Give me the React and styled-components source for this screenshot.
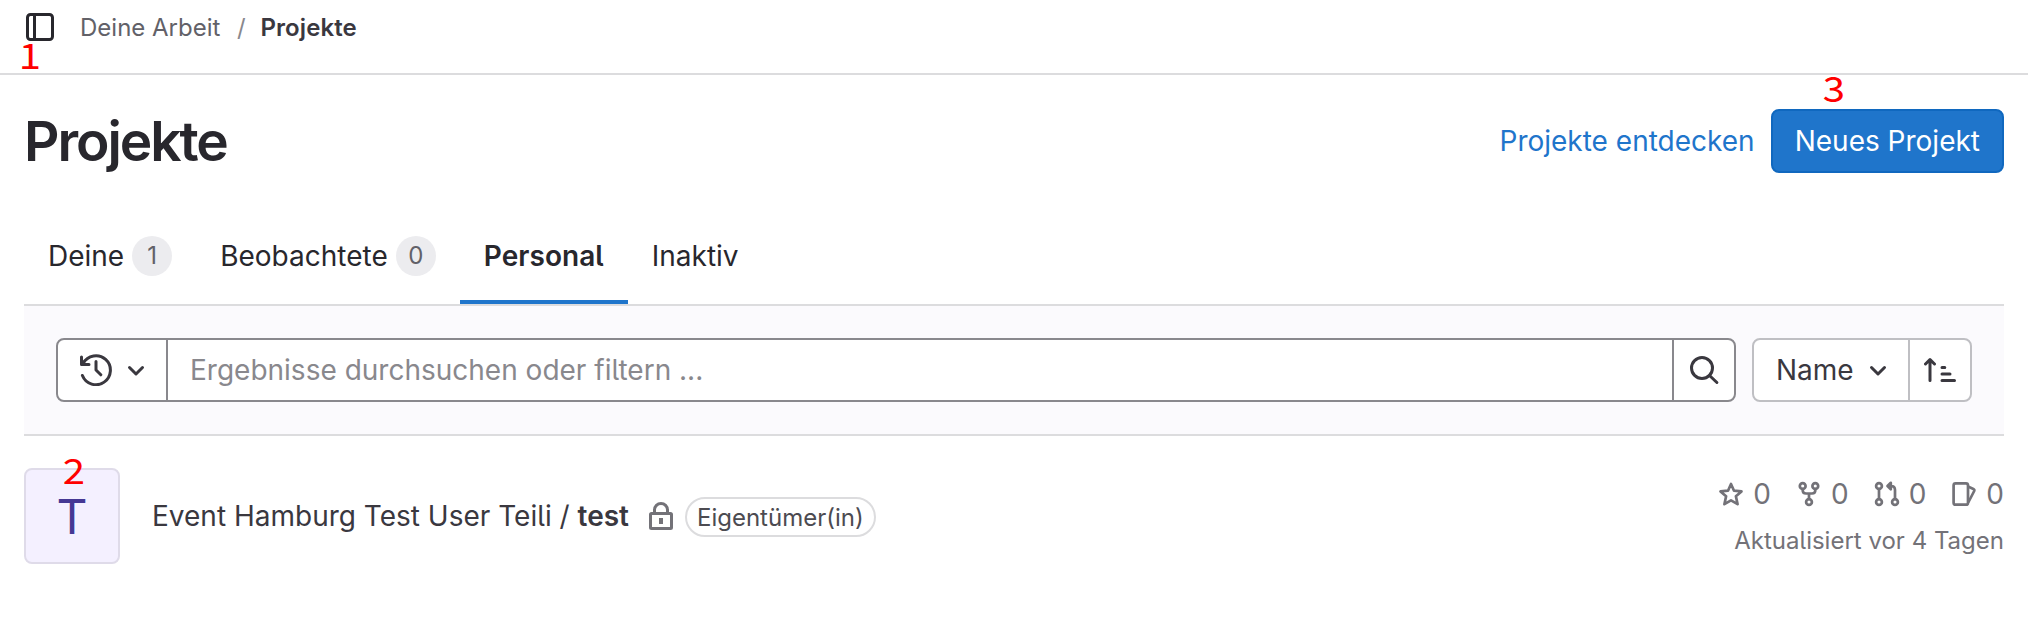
import React from "react";
import styled, { createGlobalStyle } from "styled-components";

const GlobalStyle = createGlobalStyle`
  *, *::before, *::after { box-sizing: border-box; }
  body {
    margin: 0;
    background: #fff;
    color: #28272d;
    font-family: Inter, "Noto Sans", sans-serif;
    font-size: 28px;
    line-height: 40px;
    font-feature-settings: "cv05";
    overflow: hidden;
  }
  h1, p { margin: 0; }
  button, input { font: inherit; letter-spacing: inherit; color: inherit; font-feature-settings: inherit; }
`;

const Page = styled.div`
  position: relative;
  min-height: 628px;
`;

const TopBar = styled.header`
  display: flex;
  align-items: flex-start;
  gap: 24px;
  height: 75px;
  padding: 11px 24px 0;
  border-bottom: 2px solid #dcdcde;
`;

const IconButton = styled.button`
  display: flex;
  padding: 0;
  border: 0;
  background: none;
`;

const Svg = styled.svg`
  display: block;
  flex: none;
  width: ${(p) => p.$size || 32}px;
  height: ${(p) => p.$size || 32}px;
  fill: none;
  stroke: ${(p) => p.$color || "#3a383f"};
  stroke-width: ${(p) => p.$weight || 3};
  stroke-linecap: round;
  stroke-linejoin: round;
`;

const Breadcrumbs = styled.nav`
  display: flex;
  font-size: 24px;
  line-height: 33px;
`;

const Crumb = styled.span`
  font-weight: ${(p) => (p.$current ? 600 : 400)};
  color: ${(p) => (p.$current ? "#3a383f" : "#626168")};
  letter-spacing: ${(p) => (p.$current ? "0.1px" : "0")};
`;

const Slash = styled.span`
  width: 40px;
  padding-left: 2px;
  text-align: center;
  color: #89888d;
`;

const Main = styled.main`
  padding: 34px 24px 0;
`;

const TitleRow = styled.div`
  display: flex;
  align-items: center;
  height: 64px;
`;

const Title = styled.h1`
  flex: 1;
  font-size: 55px;
  line-height: 64px;
  font-weight: 600;
  letter-spacing: -2.05px;
`;

const LinkButton = styled.a`
  margin-right: 16px;
  color: #1f75cb;
`;

const PrimaryButton = styled.button`
  height: 64px;
  padding: 0 22px;
  border: 2px solid #1068bf;
  border-radius: 8px;
  background: #1f75cb;
  color: #fff;
`;

const Tabs = styled.div`
  display: flex;
  height: 98px;
  margin-top: 35px;
  border-bottom: 2px solid #dcdcde;
`;

const Tab = styled.div`
  display: flex;
  align-items: center;
  gap: 8px;
  padding: 0 24px;
  font-weight: ${(p) => (p.$active ? 600 : 400)};
  letter-spacing: ${(p) => (p.$active ? "0.06px" : "0")};
  box-shadow: ${(p) => (p.$active ? "inset 0 -4px 0 #1f75cb" : "none")};
`;

const Count = styled.span`
  width: 40px;
  height: 40px;
  border-radius: 20px;
  background: #ececef;
  color: #626168;
  font-size: 24px;
  text-align: center;
`;

const FilterBar = styled.div`
  display: flex;
  gap: 16px;
  height: 130px;
  padding: 32px 32px 0;
  background: #fbfafd;
  border-bottom: 2px solid #dcdcde;
`;

const ControlGroup = styled.div`
  display: flex;
  flex: ${(p) => (p.$grow ? 1 : "none")};
  height: 64px;
  border: 2px solid ${(p) => p.$line};
  border-radius: 8px;
  background: #fff;
  overflow: hidden;
  && > * + * { border-left: 2px solid ${(p) => p.$line}; }
`;

const Segment = styled.button`
  display: flex;
  align-items: center;
  justify-content: space-between;
  width: ${(p) => p.$width}px;
  padding: ${(p) => p.$pad || "0"};
  border: 0;
  background: none;
  color: #3a383f;
`;

const SearchInput = styled.input`
  flex: 1;
  min-width: 0;
  padding: 0 22px;
  border: 0;
  outline: 0;
  background: none;
  &::placeholder { color: #89888d; opacity: 1; }
`;

const ProjectRow = styled.article`
  display: flex;
  align-items: center;
  height: 96px;
  margin-top: 32px;
`;

const Avatar = styled.div`
  width: 96px;
  height: 96px;
  margin-right: 32px;
  border: 2px solid #dfdbe9;
  border-radius: 8px;
  background: #f4f0ff;
  color: #453894;
  font-size: 48px;
  line-height: 94px;
  text-align: center;
`;

const ProjectName = styled.div`
  flex: 1;
  display: flex;
  align-items: center;
  color: #3a383f;
  white-space: pre;
  strong { font-weight: 600; }
`;

const LockSlot = styled.span`
  margin: 0 10px 0 18px;
`;

const RoleBadge = styled.span`
  height: 40px;
  margin-top: 2px;
  padding: 0 10px;
  border: 2px solid #dcdcde;
  border-radius: 20px;
  color: #4c4b51;
  font-size: 24px;
  line-height: 37px;
`;

const Meta = styled.div`
  display: flex;
  flex-direction: column;
  align-items: flex-end;
  gap: 7px;
  padding-top: 3px;
  color: #737278;
`;

const Stats = styled.div`
  display: flex;
  gap: 24px;
`;

const Stat = styled.span`
  display: flex;
  align-items: center;
  gap: 8px;
`;

const Updated = styled.p`
  font-size: 24px;
`;

const Marker = styled.span`
  position: absolute;
  left: ${(p) => p.$x}px;
  top: ${(p) => p.$y}px;
  color: #f00;
  font: 35.5px/36px "Noto Sans CJK SC", sans-serif;
  transform: scaleX(1.13);
`;

const SidebarIcon = () => (
  <Svg viewBox="0 0 32 32" $color="#28272d">
    <rect x="3.5" y="3.5" width="25" height="25" rx="3" />
    <path d="M10.5 3.5v25" />
  </Svg>
);

const HistoryIcon = () => (
  <Svg viewBox="0 0 32 32">
    <path d="M2.4 21.5A14.5 14.5 0 1 0 3.2 9.2M1.5 3v7.5H9M16 7.5V16l4.8 4.8" />
  </Svg>
);

const ChevronIcon = () => (
  <Svg viewBox="0 0 32 32">
    <path d="M9.5 13.5L16 20l6.5-6.5" />
  </Svg>
);

const SearchIcon = () => (
  <Svg viewBox="0 0 32 32">
    <circle cx="14" cy="14" r="10.5" />
    <path d="M21.5 21.5l7.4 7" />
  </Svg>
);

const SortIcon = () => (
  <Svg viewBox="0 0 32 32">
    <path d="M6 26.5V6M1.5 10L6 5.5l4.5 4.5M18 13.5h2.8M18 20h8M18 26.5h12.5" />
  </Svg>
);

const LockIcon = () => (
  <Svg viewBox="0 0 28 28" $size={28} $color="#737278">
    <rect x="3.5" y="11.5" width="21" height="15" rx="1" />
    <path d="M7.5 11V8a6.5 6.5 0 0 1 13 0v3" />
    <rect x="12" y="16" width="4" height="6" fill="#737278" stroke="none" />
  </Svg>
);

const StatIcon = ({ children }) => (
  <Svg viewBox="0 0 28 28" $size={28} $color="#737278" $weight={2.7}>{children}</Svg>
);

const StarIcon = () => (
  <StatIcon>
    <path d="M14 4l3 6.7 7.5.7-5.6 4.9 1.7 7.9-6.6-3.9-6.6 3.9 1.7-7.9-5.6-4.9 7.5-.7z" />
  </StatIcon>
);

const ForkIcon = () => (
  <StatIcon>
    <circle cx="7.7" cy="6" r="2.9" />
    <circle cx="20.3" cy="6" r="2.9" />
    <circle cx="14" cy="22" r="2.9" />
    <path d="M7.7 9v1.2c0 2.2 1.3 3.3 3.3 3.3h6c2 0 3.3-1.1 3.3-3.3V9M14 13.5V19" />
  </StatIcon>
);

const MergeIcon = () => (
  <StatIcon>
    <circle cx="6" cy="6" r="2.9" />
    <circle cx="6" cy="22" r="2.9" />
    <circle cx="22" cy="22" r="2.9" />
    <path d="M6 9v10M22 19v-9c0-2.5-1.5-4-4-4h-3M17.8 2.8L14.5 6l3.3 3.2z" />
  </StatIcon>
);

const IssuesIcon = () => (
  <StatIcon>
    <rect x="3.6" y="3.4" width="14.4" height="21.3" rx="2" />
    <path d="M18.5 6.8l4.9 2.2c.9.4 1.2 1.1.8 2L18.5 22" />
  </StatIcon>
);

const stats = [StarIcon, ForkIcon, MergeIcon, IssuesIcon];

export default function App() {
  return (
    <Page>
      <GlobalStyle />
      <TopBar>
        <IconButton><SidebarIcon /></IconButton>
        <Breadcrumbs>
          <Crumb>Deine Arbeit</Crumb>
          <Slash>/</Slash>
          <Crumb $current>Projekte</Crumb>
        </Breadcrumbs>
      </TopBar>
      <Main>
        <TitleRow>
          <Title>Projekte</Title>
          <LinkButton>Projekte entdecken</LinkButton>
          <PrimaryButton>Neues Projekt</PrimaryButton>
        </TitleRow>
        <Tabs>
          <Tab>Deine<Count>1</Count></Tab>
          <Tab>Beobachtete<Count>0</Count></Tab>
          <Tab $active>Personal</Tab>
          <Tab>Inaktiv</Tab>
        </Tabs>
        <FilterBar>
          <ControlGroup $grow $line="#89888d">
            <Segment $width={108} $pad="0 14px 0 22px"><HistoryIcon /><ChevronIcon /></Segment>
            <SearchInput placeholder="Ergebnisse durchsuchen oder filtern ..." />
            <Segment $width={62} $pad="0 14px"><SearchIcon /></Segment>
          </ControlGroup>
          <ControlGroup $line="#bfbfc3">
            <Segment $width={154} $pad="0 14px 0 22px">Name<ChevronIcon /></Segment>
            <Segment $width={62} $pad="0 14px"><SortIcon /></Segment>
          </ControlGroup>
        </FilterBar>
        <ProjectRow>
          <Avatar>T</Avatar>
          <ProjectName>
            <span>Event Hamburg Test User Teili / <strong>test</strong></span>
            <LockSlot><LockIcon /></LockSlot>
            <RoleBadge>Eigentümer(in)</RoleBadge>
          </ProjectName>
          <Meta>
            <Stats>
              {stats.map((Icon, i) => <Stat key={i}><Icon />0</Stat>)}
            </Stats>
            <Updated>Aktualisiert vor 4 Tagen</Updated>
          </Meta>
        </ProjectRow>
      </Main>
      <Marker $x={20} $y={36}>1</Marker>
      <Marker $x={64} $y={451}>2</Marker>
      <Marker $x={1824} $y={69}>3</Marker>
    </Page>
  );
}
